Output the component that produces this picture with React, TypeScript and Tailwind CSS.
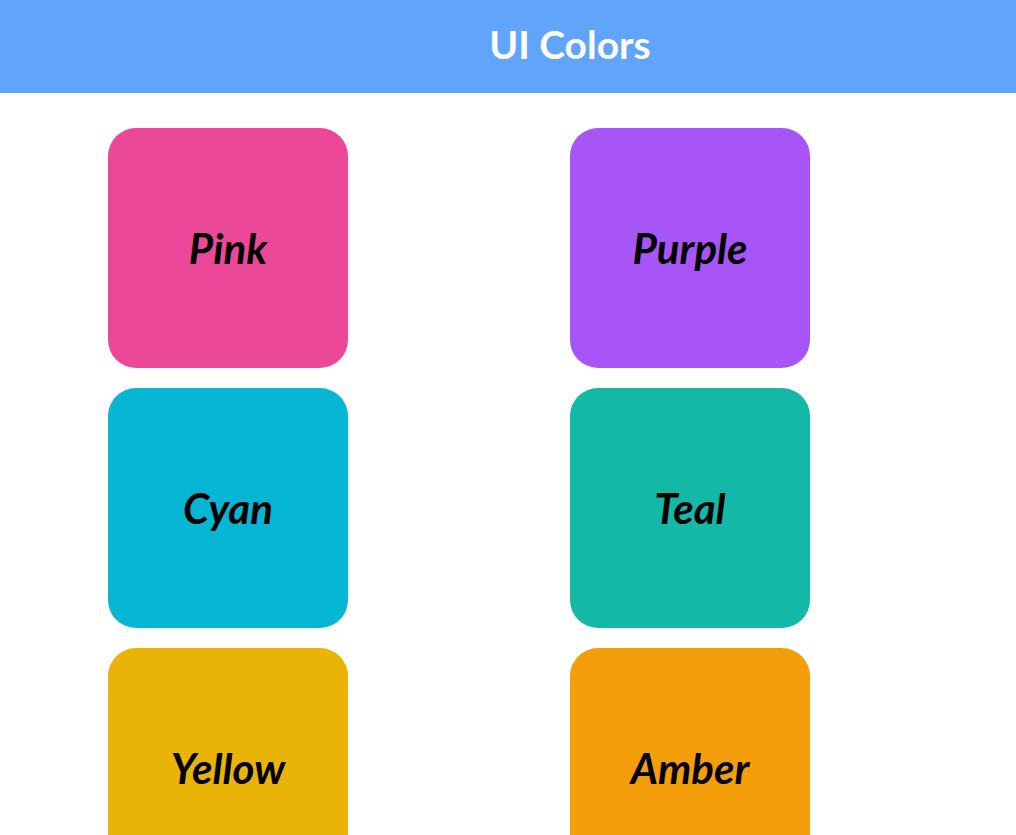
import React from "react";

const cards = [
  { name: "Pink", cls: "bg-[#ec4899]" },
  { name: "Purple", cls: "bg-[#a855f7]" },
  { name: "Cyan", cls: "bg-[#06b6d4]" },
  { name: "Teal", cls: "bg-[#14b8a6]" },
  { name: "Yellow", cls: "bg-[#eab308]" },
  { name: "Amber", cls: "bg-[#f59e0b]" },
];

export default function App() {
  return (
    <div className="min-h-screen bg-white font-['Lato',sans-serif]">
      <header className="h-[93px] bg-[#60a5fa] flex items-center justify-center pl-[124px] pb-[4px]">
        <h1 className="text-white font-bold text-[39px] leading-none">UI Colors</h1>
      </header>
      <div className="grid grid-cols-[240px_240px] gap-x-[222px] gap-y-[20px] pl-[108px] pt-[35px]">
        {cards.map((c) => (
          <div
            key={c.name}
            className={`${c.cls} w-[240px] h-[240px] rounded-[28px] flex items-center justify-center`}
          >
            <span className="text-black font-bold italic text-[42px] leading-none">{c.name}</span>
          </div>
        ))}
      </div>
    </div>
  );
}
